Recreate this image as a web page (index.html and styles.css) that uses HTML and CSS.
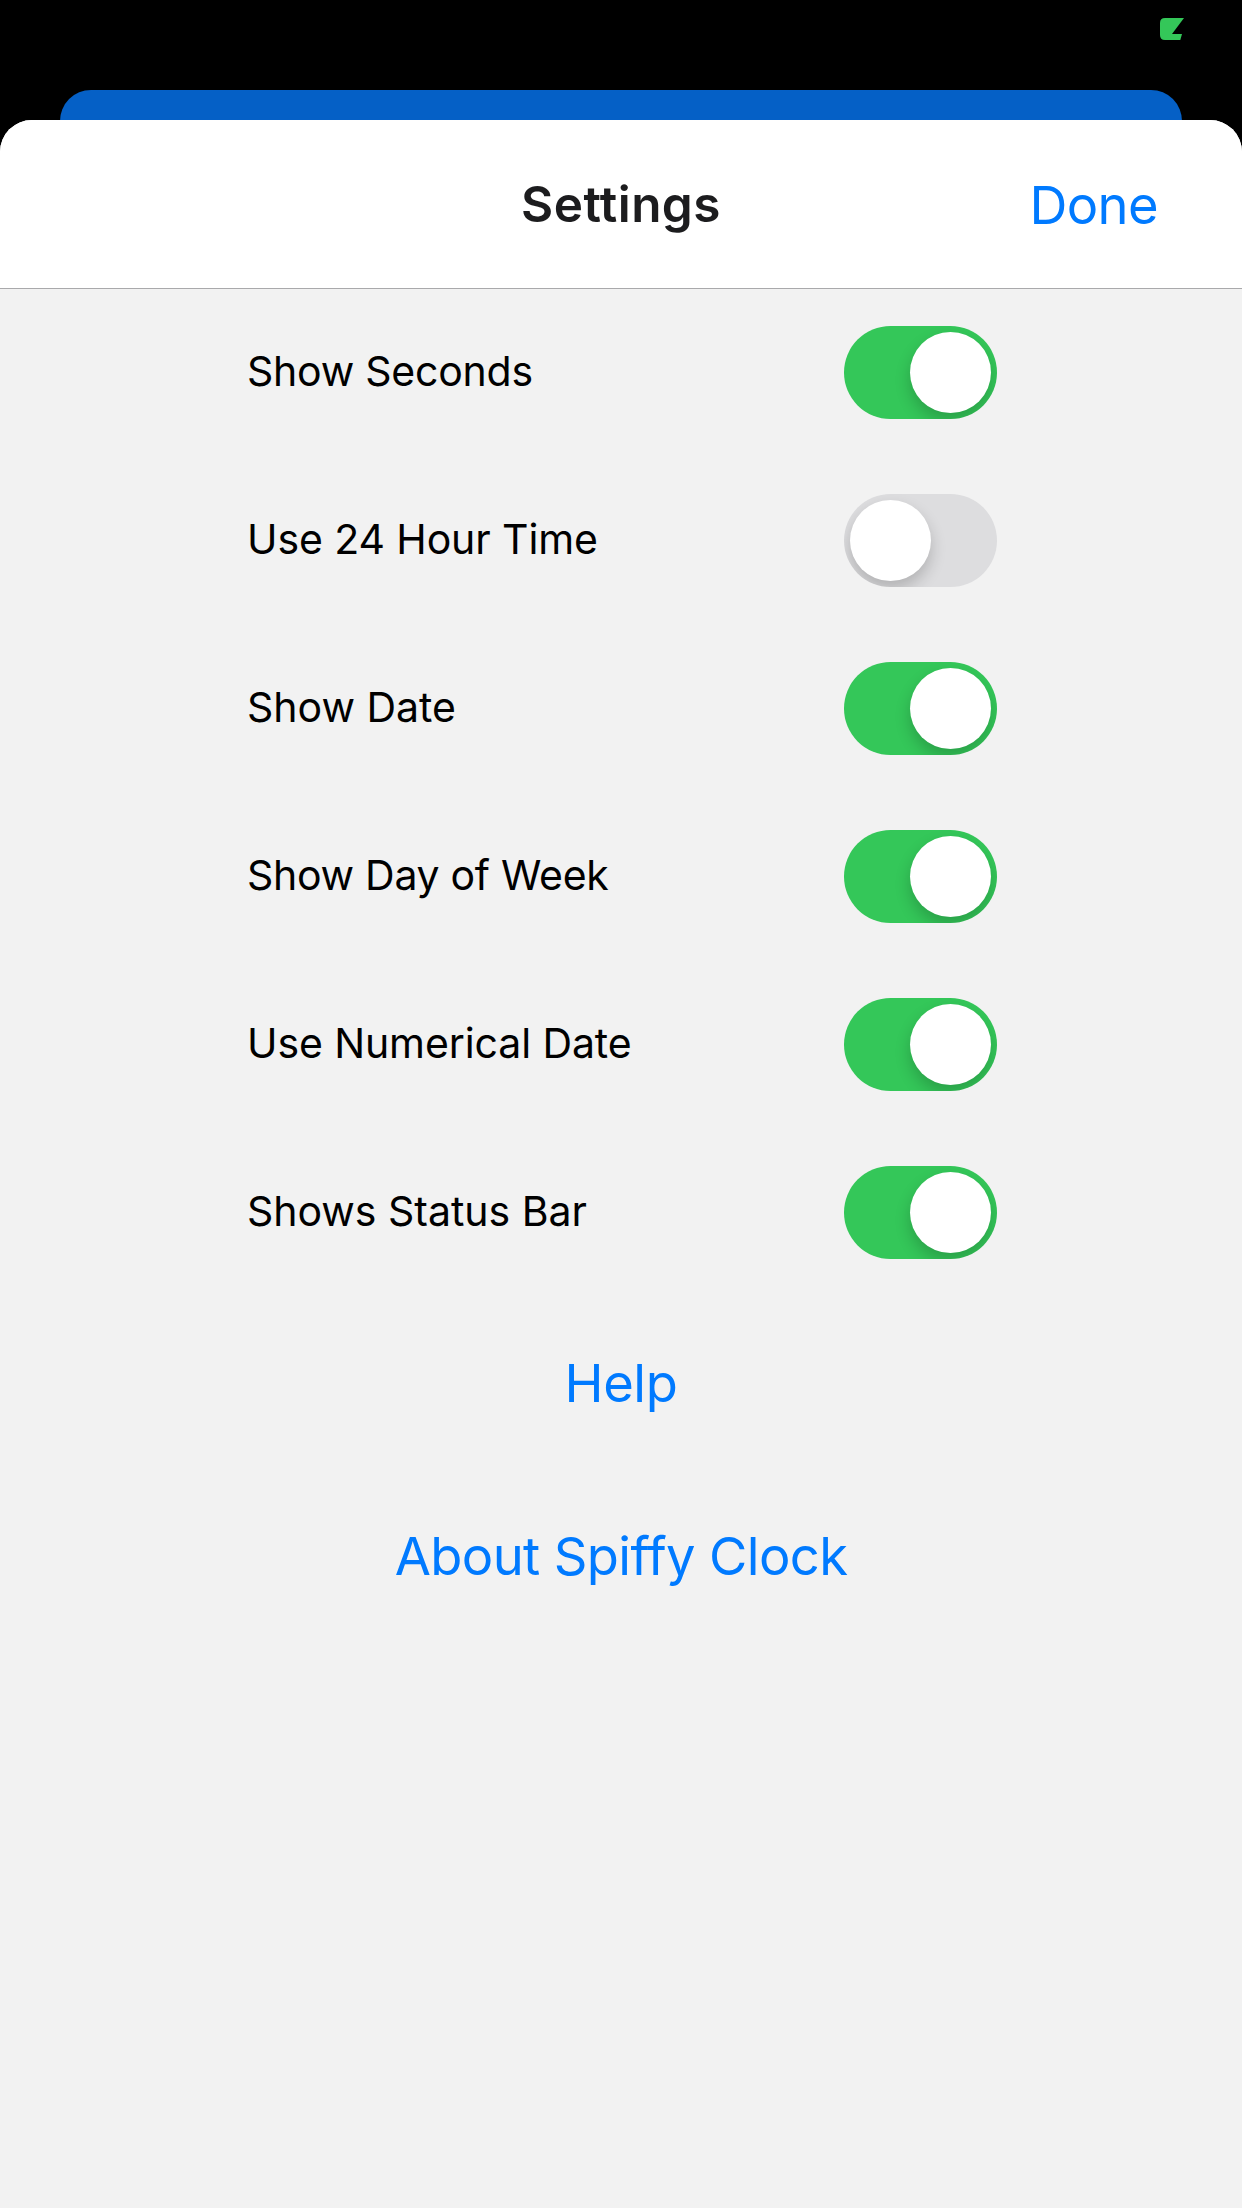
FILE: index.html
```html
<!DOCTYPE html>
<html lang="en">
<head>
<meta charset="utf-8">
<title>Settings</title>
<link rel="stylesheet" href="styles.css">
</head>
<body>
<div class="status"><svg class="battery" viewBox="0 0 24 23"><path d="M5 0H24L12 16H22L20.3 22H5Q0 22 0 17V5Q0 0 5 0Z"/></svg></div>
<div class="backdrop"></div>
<main class="sheet">
<header class="nav"><h1 class="title">Settings</h1><button class="done">Done</button></header>
<section class="rows">
<div class="row"><span class="label seconds">Show Seconds</span><span class="switch on"><i class="knob"></i></span></div>
<div class="row"><span class="label hours">Use 24 Hour Time</span><span class="switch"><i class="knob"></i></span></div>
<div class="row"><span class="label date">Show Date</span><span class="switch on"><i class="knob"></i></span></div>
<div class="row"><span class="label weekday">Show Day of Week</span><span class="switch on"><i class="knob"></i></span></div>
<div class="row"><span class="label numerical">Use Numerical Date</span><span class="switch on"><i class="knob"></i></span></div>
<div class="row"><span class="label statusbar">Shows Status Bar</span><span class="switch on"><i class="knob"></i></span></div>
</section>
<div class="links"><a class="link help">Help</a><a class="link about">About Spiffy Clock</a></div>
</main>
</body>
</html>
```
FILE: styles.css
```css
* { box-sizing: border-box; }
body { margin: 0; height: 2208px; background: #000; font-family: Inter, sans-serif; overflow: hidden; display: flex; flex-direction: column; }
.status { height: 90px; flex: none; display: flex; justify-content: flex-end; padding: 18px 58px 0 0; }
.battery { width: 24px; height: 23px; fill: #34c759; }
.backdrop { height: 60px; flex: none; margin: 0 60px -30px; background: #0560c6; border-radius: 31px 31px 0 0; }
.sheet { flex: 1; background: #f2f2f2; border-radius: 32px 32px 0 0; overflow: hidden; z-index: 1; }
.nav { height: 169px; background: #fff; border-bottom: 1px solid #a9a9ab; display: grid; grid-template-columns: 1fr auto 1fr; align-items: center; padding: 2px 84px 0; }
.title { grid-column: 2; margin: 0; padding-bottom: 2px; font-size: 49.5px; font-weight: 600; letter-spacing: .45px; color: #1c1c1e; }
.done { justify-self: end; border: 0; padding: 0; background: none; font: 400 52.5px Inter, sans-serif; letter-spacing: -.6px; color: #007aff; }
.rows { margin-top: -.5px; padding: 0 245px 0 247px; }
.row { height: 168px; display: flex; align-items: center; justify-content: space-between; }
.label { padding-bottom: 3px; font-size: 41px; color: #000; white-space: nowrap; }
.seconds { letter-spacing: -.24px; }
.hours { letter-spacing: -.1px; }
.weekday { letter-spacing: -.28px; }
.numerical { letter-spacing: -.1px; }
.statusbar { letter-spacing: -.02px; }
.switch { width: 153px; height: 93px; border-radius: 47px; background: #dddddf; padding: 6px; display: flex; overflow: hidden; }
.on { background: #34c759; justify-content: flex-end; }
.knob { width: 81px; height: 81px; border-radius: 50%; background: #fff; box-shadow: 0 8px 16px rgba(0,0,0,.2); }
.links { display: flex; flex-direction: column; align-items: center; }
.link { height: 173px; display: flex; align-items: center; font-size: 52.5px; color: #007aff; white-space: nowrap; }
.help { letter-spacing: -.4px; }
.about { letter-spacing: -.62px; }
```
